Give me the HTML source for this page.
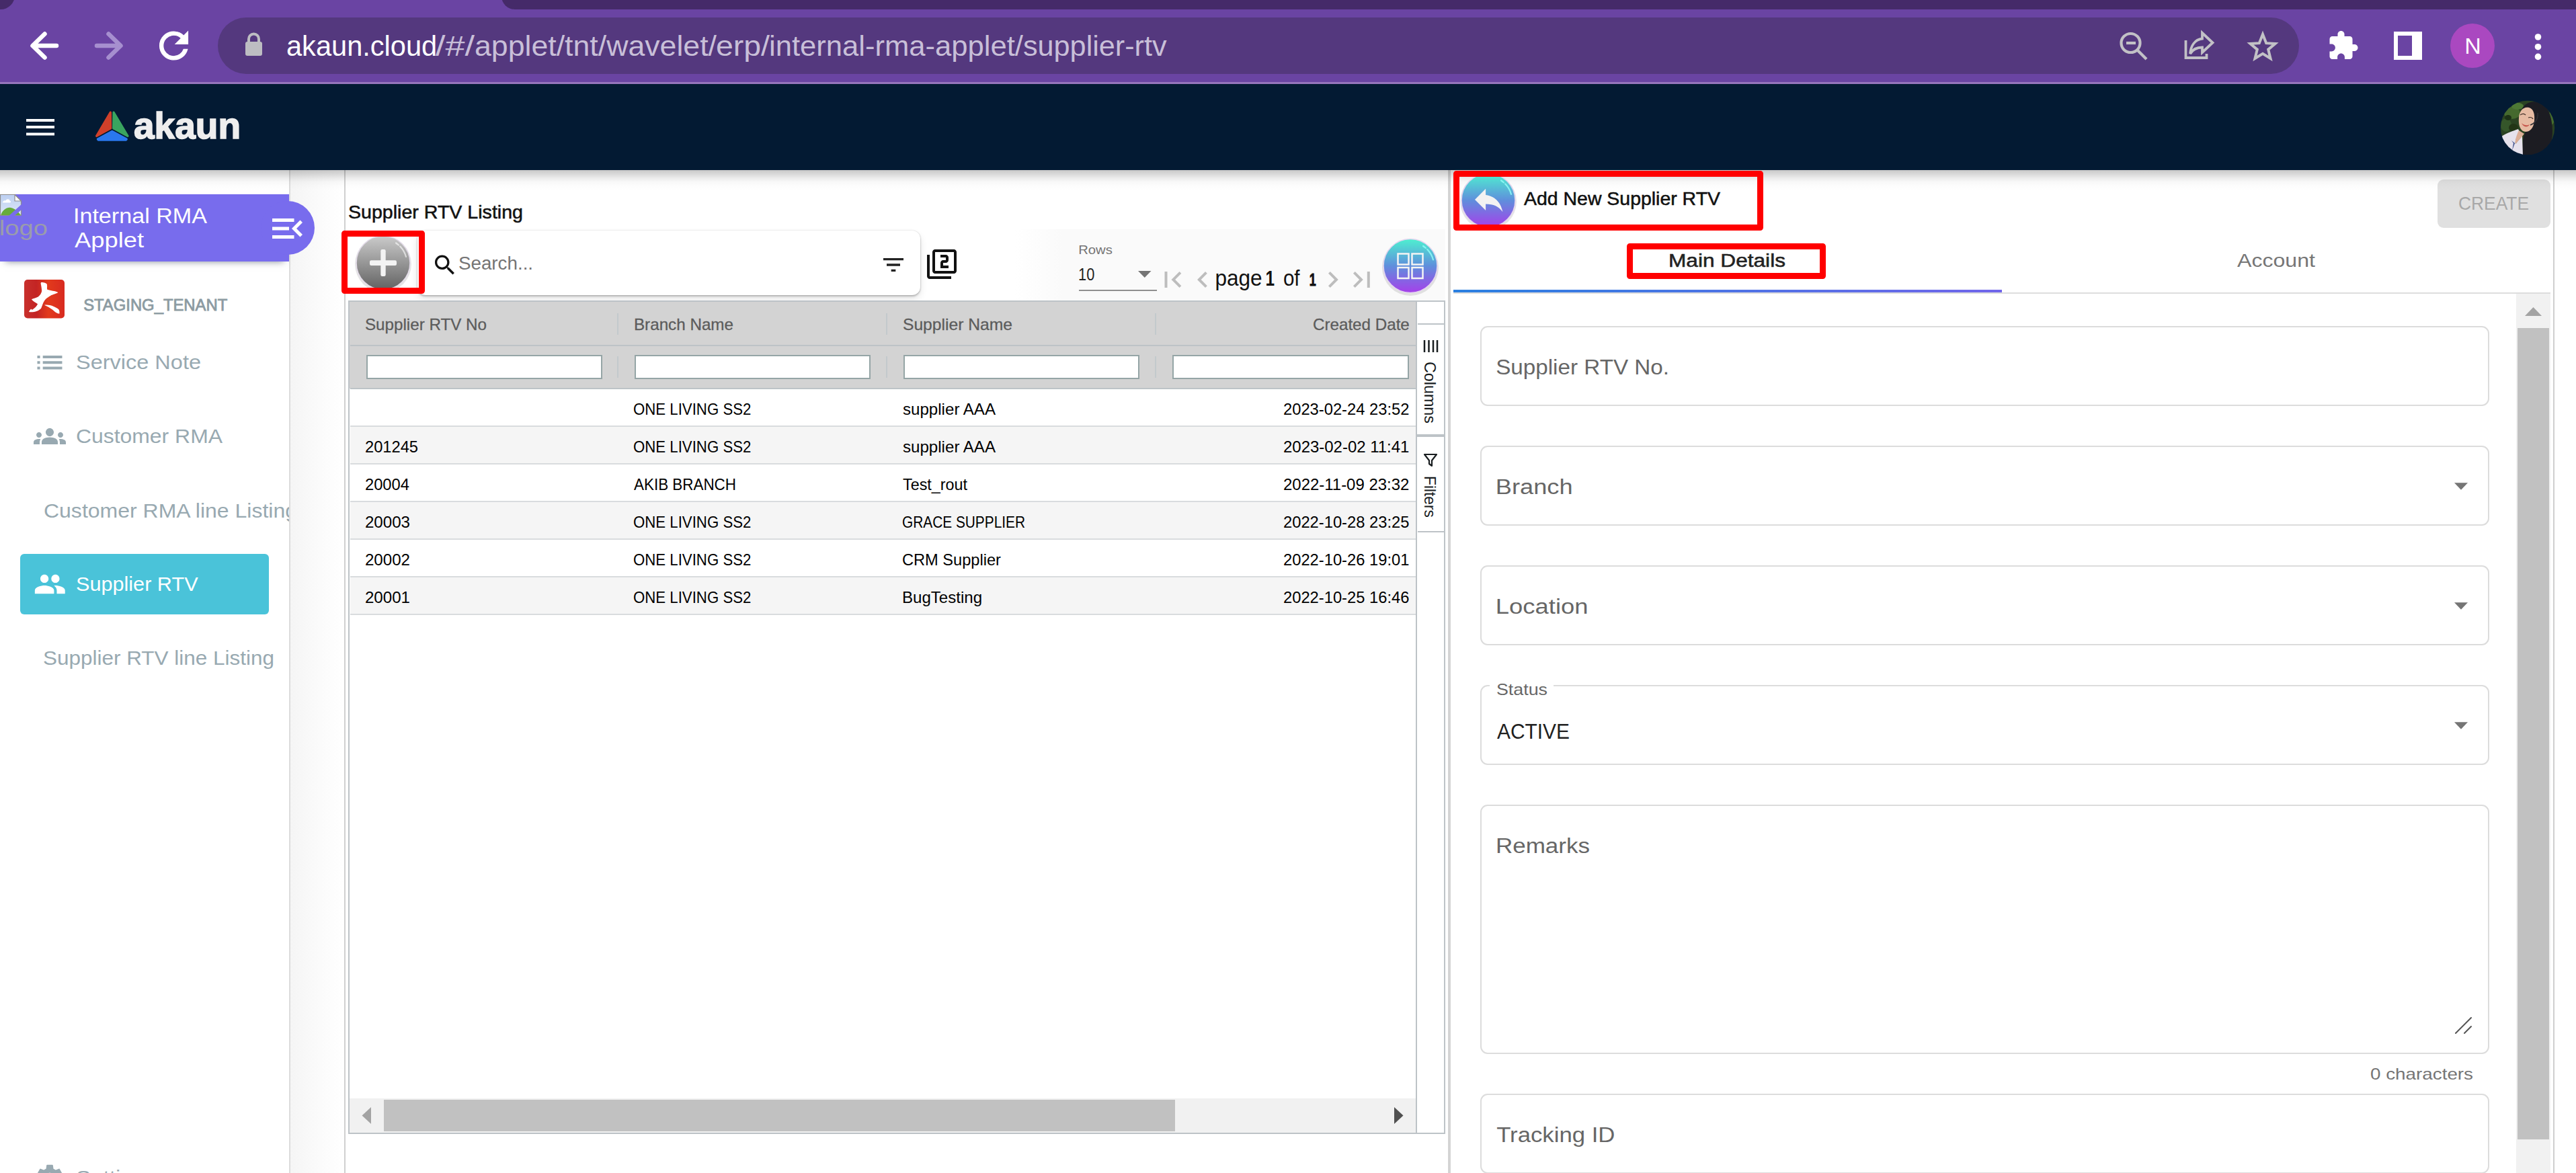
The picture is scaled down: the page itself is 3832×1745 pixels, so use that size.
<!DOCTYPE html>
<html lang="en"><head><meta charset="utf-8"><title>Supplier RTV</title>
<style>
html,body{margin:0;padding:0;background:#fff;}
body{width:3832px;height:1745px;overflow:hidden;position:relative;font-family:"Liberation Sans", Arial, sans-serif;}
#bg div{position:absolute;box-sizing:border-box;}
#bg{position:absolute;left:0;top:0;width:3832px;height:1745px;overflow:hidden;}
svg#ov{position:absolute;left:0;top:0;font-family:"Liberation Sans", Arial, sans-serif;}
</style></head><body>
<div id="bg">
<div style="left:0px;top:0px;width:3832px;height:122px;background:#6a44a3;"></div>
<div style="left:0px;top:122px;width:3832px;height:3px;background:#9675bd;"></div>
<div style="left:746px;top:-6px;width:3086px;height:19.7px;background:#452a69;border-bottom-left-radius:21px;"></div>
<div style="left:-20px;top:-7px;width:42px;height:20.7px;background:#452a69;border-bottom-right-radius:21px;"></div>
<div style="left:324px;top:26px;width:3096px;height:84px;background:#54387e;border-radius:42px;"></div>
<div style="left:0px;top:253px;width:430px;height:1500px;background:#fff;"></div>
<div style="left:430px;top:253px;width:2px;height:1500px;background:#dcdcdc;"></div>
<div style="left:432px;top:253px;width:80px;height:1500px;background:linear-gradient(90deg,#f5f5f5,#fbfbfb 55%,#fff);"></div>
<div style="left:512px;top:253px;width:2px;height:1500px;background:#d0d0d0;"></div>
<div style="left:0px;top:289px;width:430px;height:100px;background:#786ced;box-shadow:0 8px 10px -8px rgba(50,60,80,.6);"></div>
<div style="left:388px;top:299px;width:80px;height:80px;background:#786ced;border-radius:40px;"></div>
<div style="left:30px;top:824px;width:370px;height:90px;background:#4ac3d9;border-radius:6px;"></div>
<div style="left:1380px;top:341px;width:770px;height:107px;background:linear-gradient(90deg,#fff 0,#fff 130px,#fafafa 200px,#fafafa);"></div>
<div style="left:621px;top:343px;width:748px;height:96px;background:#fff;border-radius:12px;box-shadow:0 2px 3px rgba(0,0,0,.22),0 6px 12px rgba(0,0,0,.10),0 0 2px rgba(0,0,0,.18);"></div>
<div style="left:1605px;top:431px;width:116px;height:2px;background:#8f8f8f;"></div>
<div style="left:518px;top:447px;width:1632px;height:1240px;background:#fff;border:2px solid #bdc3c7;"></div>
<div style="left:520px;top:449px;width:1588px;height:129px;background:#d3d3d3;"></div>
<div style="left:521px;top:513px;width:1587px;height:2px;background:#bdc3c7;"></div>
<div style="left:521px;top:577px;width:1587px;height:2px;background:#bdc3c7;"></div>
<div style="left:918px;top:466px;width:2px;height:32px;background:#c3c9cc;"></div>
<div style="left:918px;top:530px;width:2px;height:32px;background:#c3c9cc;"></div>
<div style="left:1318px;top:466px;width:2px;height:32px;background:#c3c9cc;"></div>
<div style="left:1318px;top:530px;width:2px;height:32px;background:#c3c9cc;"></div>
<div style="left:1718px;top:466px;width:2px;height:32px;background:#c3c9cc;"></div>
<div style="left:1718px;top:530px;width:2px;height:32px;background:#c3c9cc;"></div>
<div style="left:545px;top:528px;width:351px;height:36px;background:#fff;border:2px solid #95a5a6;"></div>
<div style="left:944px;top:528px;width:351px;height:36px;background:#fff;border:2px solid #95a5a6;"></div>
<div style="left:1344px;top:528px;width:351px;height:36px;background:#fff;border:2px solid #95a5a6;"></div>
<div style="left:1744px;top:528px;width:352px;height:36px;background:#fff;border:2px solid #95a5a6;"></div>
<div style="left:521px;top:633px;width:1587px;height:2px;background:#d9dcde;"></div>
<div style="left:521px;top:635px;width:1587px;height:54px;background:#f5f5f5;"></div>
<div style="left:521px;top:689px;width:1587px;height:2px;background:#d9dcde;"></div>
<div style="left:521px;top:745px;width:1587px;height:2px;background:#d9dcde;"></div>
<div style="left:521px;top:747px;width:1587px;height:54px;background:#f5f5f5;"></div>
<div style="left:521px;top:801px;width:1587px;height:2px;background:#d9dcde;"></div>
<div style="left:521px;top:857px;width:1587px;height:2px;background:#d9dcde;"></div>
<div style="left:521px;top:859px;width:1587px;height:54px;background:#f5f5f5;"></div>
<div style="left:521px;top:913px;width:1587px;height:2px;background:#d9dcde;"></div>
<div style="left:520px;top:1634px;width:1588px;height:51px;background:#f1f1f1;"></div>
<div style="left:571px;top:1636px;width:1177px;height:47px;background:#c1c1c1;"></div>
<div style="left:2106px;top:449px;width:2px;height:1236px;background:#bdc3c7;"></div>
<div style="left:2109px;top:481px;width:39px;height:2px;background:#bdc3c7;"></div>
<div style="left:2108px;top:646px;width:40px;height:4px;background:#bdc3c7;"></div>
<div style="left:2109px;top:790px;width:39px;height:2px;background:#bdc3c7;"></div>
<div style="left:2154px;top:253px;width:4px;height:1500px;background:#d4d4d4;"></div>
<div style="left:3798px;top:253px;width:2px;height:1500px;background:#cfcfcf;"></div>
<div style="left:3626px;top:267px;width:168px;height:72px;background:#e0e0e0;border-radius:9px;"></div>
<div style="left:2162px;top:435px;width:1632px;height:2px;background:#dddddd;"></div>
<div style="left:3743px;top:437px;width:51px;height:1320px;background:#f1f1f1;"></div>
<div style="left:3745px;top:488px;width:47px;height:1207px;background:#c1c1c1;"></div>
<div style="left:2202px;top:485px;width:1501px;height:119px;border:2px solid #dcdcdc;border-radius:11px;background:#fff;"></div>
<div style="left:2202px;top:663px;width:1501px;height:119px;border:2px solid #dcdcdc;border-radius:11px;background:#fff;"></div>
<div style="left:2202px;top:841px;width:1501px;height:119px;border:2px solid #dcdcdc;border-radius:11px;background:#fff;"></div>
<div style="left:2202px;top:1019px;width:1501px;height:119px;border:2px solid #dcdcdc;border-radius:11px;background:#fff;"></div>
<div style="left:2216px;top:1017px;width:95px;height:6px;background:#fff;"></div>
<div style="left:2202px;top:1197px;width:1501px;height:371px;border:2px solid #dcdcdc;border-radius:11px;background:#fff;"></div>
<div style="left:2202px;top:1627px;width:1501px;height:119px;border:2px solid #dcdcdc;border-radius:11px;background:#fff;"></div>
<div style="left:0px;top:253px;width:3832px;height:30px;background:linear-gradient(rgba(0,0,0,.215) 0,rgba(0,0,0,.13) 25%,rgba(0,0,0,.07) 42%,rgba(0,0,0,.027) 59%,rgba(0,0,0,.012) 76%,rgba(0,0,0,0) 100%);"></div>
<div style="left:0px;top:125px;width:3832px;height:128px;background:#031a33;"></div>
</div>
<svg id="ov" width="3832" height="1745" viewBox="0 0 3832 1745">
<defs>
<linearGradient id="gAqua" x1="0" y1="0" x2="0" y2="1"><stop offset="0" stop-color="#4ef0d0"/><stop offset="0.5" stop-color="#5f8fdc"/><stop offset="1" stop-color="#a63fea"/></linearGradient>
<linearGradient id="gGrey" x1="0" y1="0" x2="0" y2="1"><stop offset="0" stop-color="#cbcbcb"/><stop offset="1" stop-color="#626262"/></linearGradient>
<linearGradient id="gSky" x1="0" y1="0" x2="0" y2="1"><stop offset="0" stop-color="#bdd0f2"/><stop offset="1" stop-color="#dde7f8"/></linearGradient>
<linearGradient id="gTab" x1="0" y1="0" x2="1" y2="0"><stop offset="0" stop-color="#2b80e0"/><stop offset="1" stop-color="#7166ea"/></linearGradient>
<linearGradient id="gRed" x1="0" y1="0" x2="1" y2="0"><stop offset="0" stop-color="#c8302c"/><stop offset="0.3" stop-color="#c32424"/><stop offset="0.6" stop-color="#e23a1c"/><stop offset="1" stop-color="#d82a20"/></linearGradient>
<radialGradient id="gFace" cx="0.5" cy="0.4" r="0.5"><stop offset="0" stop-color="#c79a80"/><stop offset="1" stop-color="#8a5f4c"/></radialGradient>
<filter id="fBlur" x="-10%" y="-10%" width="120%" height="120%"><feGaussianBlur stdDeviation="0.700"/></filter>
<clipPath id="cAv"><circle cx="3760" cy="190" r="40.200"/></clipPath>
<clipPath id="cTrk"><rect x="2200" y="1640" width="400" height="66"/></clipPath>
<clipPath id="cSide"><rect x="0" y="253" width="430" height="1500"/></clipPath>
</defs>
<g fill="none" stroke-width="6.5" stroke-linecap="round" stroke-linejoin="round"><path stroke="#fff" d="M84 68 H49 M66.500 50.500 L48.500 68 L66.500 85.500"/><path stroke="#a68fcf" d="M144 68 H179 M161.500 50.500 L179.500 68 L161.500 85.500"/></g>
<path transform="translate(227 36.5) scale(2.625)" fill="#fff" d="M17.65 6.35C16.2 4.9 14.21 4 12 4c-4.42 0-7.99 3.58-7.99 8s3.57 8 7.99 8c3.73 0 6.84-2.55 7.73-6h-2.08c-.82 2.33-3.04 4-5.65 4-3.31 0-6-2.69-6-6s2.69-6 6-6c1.66 0 3.14.69 4.22 1.78L13 11h7V4l-2.35 2.35z" stroke="#fff" stroke-width=".45"/>
<rect x="365" y="62" width="25" height="21" rx="3" fill="#bdbdc2"/>
<path d="M370 64 V58 a7.5 7.5 0 0 1 15 0 V64" fill="none" stroke="#bdbdc2" stroke-width="4"/>
<text x="425.97" y="82.5" font-size="42" fill="#fff" textLength="224.28" lengthAdjust="spacingAndGlyphs">akaun.cloud</text>
<text x="648.0" y="82.5" font-size="42" fill="#c8bfd8" textLength="58.01" lengthAdjust="spacingAndGlyphs">/#/</text>
<text x="705.99" y="82.5" font-size="42" fill="#c8bfd8" textLength="360.01" lengthAdjust="spacingAndGlyphs">applet/tnt/wavelet/</text>
<text x="1064.98" y="82.5" font-size="42" fill="#c8bfd8" textLength="80.04" lengthAdjust="spacingAndGlyphs">erp/</text>
<text x="1143.98" y="82.5" font-size="42" fill="#c8bfd8" textLength="378.02" lengthAdjust="spacingAndGlyphs">internal-rma-applet/</text>
<text x="1521.99" y="82.5" font-size="42" fill="#c8bfd8" textLength="213.61" lengthAdjust="spacingAndGlyphs">supplier-rtv</text>
<g fill="none" stroke="#c2c1c6" stroke-width="4.200" stroke-linecap="butt"><circle cx="3169.500" cy="64" r="14"/><path d="M3180 75 L3193 88"/><path d="M3163 64 H3177"/></g>
<g fill="none" stroke="#c2c1c6" stroke-width="3.800" stroke-linejoin="miter"><path d="M3251.500 60 V86 H3282.500 V80"/><path d="M3276 49 L3291.500 63.500 L3276 78 V70.500 C3268 70.500 3262 73 3258 80 C3259 68 3265 59 3276 57.500 Z"/></g>
<path d="M3366 51 L3371.200 64.200 L3384.500 65 L3374.200 73.600 L3377.500 87 L3366 79.800 L3354.500 87 L3357.800 73.600 L3347.500 65 L3360.800 64.200 Z" fill="none" stroke="#c2c1c6" stroke-width="4" stroke-linejoin="miter"/>
<path transform="translate(3461.5 44) scale(2.0)" fill="#fff" d="M20.500 11H19V7c0-1.100-.900-2-2-2h-4V3.500C13 2.120 11.880 1 10.500 1S8 2.120 8 3.500V5H4c-1.100 0-1.990.900-1.990 2v3.800H3.500c1.490 0 2.700 1.210 2.700 2.700s-1.210 2.700-2.700 2.700H2V20c0 1.100.900 2 2 2h3.800v-1.500c0-1.490 1.210-2.700 2.700-2.700 1.490 0 2.700 1.210 2.700 2.700V22H17c1.100 0 2-.900 2-2v-4h1.500c1.380 0 2.500-1.120 2.500-2.500S21.880 11 20.500 11z" />
<path fill-rule="evenodd" fill="#fff" d="M3561 47 H3603 V89 H3561 Z M3567 53 V83 H3588 V53 Z"/>
<circle cx="3678" cy="68" r="33" fill="#aa48c0"/>
<text x="3678.5" y="80" font-size="34" fill="#fff" text-anchor="middle">N</text>
<circle cx="3775.500" cy="55" r="4.800" fill="#fff"/><circle cx="3775.500" cy="69.700" r="4.800" fill="#fff"/><circle cx="3775.500" cy="84.400" r="4.800" fill="#fff"/>
<rect x="39" y="177" width="42" height="4" fill="#fff"/><rect x="39" y="187" width="42" height="4" fill="#fff"/><rect x="39" y="197.500" width="42" height="4" fill="#fff"/>
<g stroke-linejoin="round" stroke-width="3.400"><path d="M164.300 167.300 L143.700 202.300 L164.600 190.700 Z" fill="#d0402a" stroke="#d0402a"/><path d="M169.100 167.300 L189.900 202.300 L168.800 190.700 Z" fill="#3aa55f" stroke="#3aa55f"/><path d="M166.800 195.600 L145.500 207 L146.500 208.100 L187.200 208.100 L188.200 207 Z" fill="#2a78ee" stroke="#2a78ee"/></g>
<text x="198.98" y="206" font-size="55" fill="#eeeeee" font-weight="bold" textLength="159.08" lengthAdjust="spacingAndGlyphs" stroke="#eeeeee" stroke-width="1.6">akaun</text>
<g clip-path="url(#cAv)"><g filter="url(#fBlur)"><rect x="3719" y="149" width="82" height="82" fill="#2c4322"/><ellipse cx="3737" cy="168" rx="12" ry="9" fill="#44692e"/><ellipse cx="3728" cy="186" rx="8" ry="10" fill="#35562a"/><ellipse cx="3745" cy="158" rx="9" ry="5" fill="#4e7835"/><ellipse cx="3739" cy="190" rx="7" ry="6" fill="#223519"/><ellipse cx="3795" cy="176" rx="5" ry="10" fill="#456c2f"/><ellipse cx="3731" cy="175" rx="5" ry="4" fill="#1f3117"/><path d="M3750 168 C3752 152 3770 148 3782 154 C3792 160 3797 178 3797 196 C3797 214 3790 226 3778 232 L3752 232 C3752 222 3752 210 3755 200 C3758 192 3768 186 3769 176 C3769 166 3760 160 3750 168 Z" fill="#1d1d22"/><path d="M3747 176 C3747 165 3754 158 3762 160 C3769 162 3771 170 3770 180 C3769 190 3764 196 3757 196 C3750 196 3746 187 3747 176 Z" fill="#e6bba3"/><path d="M3751 183 C3755 187 3760 187 3763 185 C3761 190 3754 190 3751 183 Z" fill="#c8584e"/><path d="M3749 171 C3752 169 3755 169 3757 171 M3761 175 C3764 174 3767 175 3768 177" stroke="#3a2a24" stroke-width="1.300" fill="none"/><path d="M3721 203 C3730 197 3738 195 3746 192 L3748 196 C3744 203 3741 209 3742 214 L3752 202 L3753 232 L3738 232 C3730 224 3724 214 3721 203 Z" fill="#e6e2ec"/><path d="M3747 194 L3755 199 L3751 204 L3742 214 C3741 208 3744 200 3747 194 Z" fill="#dcae96"/><path d="M3736 209 L3741 213 L3737 224 L3739 213 Z" fill="#3d4f8a"/><path d="M3764 186 C3770 184 3776 178 3775 168" stroke="#2e2e34" stroke-width="1.500" fill="none"/></g></g>
<g><path d="M0.500 289.500 H22 L31.500 299 V320.500 H0.500 Z" fill="url(#gSky)" stroke="#8e8e8e" stroke-width="1.200"/><path d="M22 289.500 V299 H31.500 Z" fill="#fdfdfd" stroke="#8e8e8e" stroke-width="1.200" stroke-linejoin="round"/><path d="M1.200 320 C4 312 10 308 16 309 C22 310 27 315 31 320 Z" fill="#67ab3c"/><path d="M4 301.500 C4 298.500 7 297.500 8.500 298.500 C9.500 295.500 14 295.500 14.500 298.500 C16.500 298.500 16.500 301.500 15 301.500 Z" fill="#fff"/><path d="M32.500 303.500 V311.500 L21 321.500 H12.500 Z" fill="#786ced"/></g>
<text x="-1.16" y="350" font-size="32" fill="#9a9cab" textLength="72.26" lengthAdjust="spacingAndGlyphs">logo</text>
<text x="108.95" y="332" font-size="31" fill="#fff" textLength="199.07" lengthAdjust="spacingAndGlyphs">Internal RMA</text>
<text x="111.0" y="368" font-size="31" fill="#fff" textLength="103.0" lengthAdjust="spacingAndGlyphs">Applet</text>
<path transform="translate(397.5 310) scale(2.5)" fill="#fff" d="M3 18h13v-2H3v2zm0-5h10v-2H3v2zm0-7v2h13V6H3zm18 9.590L17.420 12 21 8.410 19.590 7l-5 5 5 5L21 15.590z" />
<rect x="36" y="416" width="60" height="57.500" rx="5" fill="url(#gRed)"/>
<path fill="#fff" d="M61.400 420.100 C65 420 69 421 69.900 423 C70.500 426 69.500 428.500 70.300 430.700 C75 432.500 82 432.500 86.400 434.900 C83 437.500 77 438 73.700 440.700 C70 443 67.500 445 66 447.600 C63.500 451 63 455 61.400 458.300 C58 463 50 465 43 464.100 C43.500 462.500 44.500 461 46.100 459.500 C47 460.500 47.500 461 48.500 460.500 C51.500 458.500 54.500 455.500 56.100 452.200 C52.500 450 49 448 46.900 445.300 C50 443.500 54 443 56.800 441.400 C60 439 61.500 436 62.200 433 C62 429 61.500 426 60.700 422.300 C60.500 421 61 420.300 61.400 420.100 Z M66 453.700 C70 453 75 453.800 78.300 455.300 C82 457 85.500 458.500 87.500 460.600 C88.500 462.500 88.800 465 88.300 466.800 C85 466.500 82.500 464.500 79.900 462.200 C77 460 74.500 458.300 72.200 456.800 C70 455.500 68 454.800 66 453.700 Z"/>
<text x="124.19" y="462" font-size="23" fill="#8c9ba2" textLength="214.01" lengthAdjust="spacingAndGlyphs" stroke="#8c9ba2" stroke-width=".8">STAGING_TENANT</text>
<path transform="translate(49.3 514.6) scale(2.055)" fill="#98a9b1" d="M3 13h2v-2H3v2zm0 4h2v-2H3v2zm0-8h2V7H3v2zm4 4h14v-2H7v2zm0 4h14v-2H7v2zM7 7v2h14V7H7z" />
<text x="112.96" y="549" font-size="30" fill="#98a9b1" textLength="186.07" lengthAdjust="spacingAndGlyphs">Service Note</text>
<path transform="translate(50 625) scale(2)" fill="#98a9b1" d="M12 12.750c1.630 0 3.070.390 4.240.900 1.080.480 1.760 1.560 1.760 2.730V18H6v-1.610c0-1.180.680-2.260 1.760-2.730 1.170-.520 2.610-.910 4.240-.910zM4 13c1.100 0 2-.900 2-2s-.900-2-2-2-2 .900-2 2 .900 2 2 2zm1.130 1.100c-.370-.060-.740-.100-1.130-.100-.990 0-1.930.210-2.780.580C.480 14.900 0 15.620 0 16.430V18h4.500v-1.610c0-.830.230-1.610.630-2.290zM20 13c1.100 0 2-.900 2-2s-.900-2-2-2-2 .900-2 2 .900 2 2 2zm4 3.430c0-.810-.480-1.530-1.220-1.850-.850-.370-1.790-.580-2.780-.580-.390 0-.760.040-1.130.100.400.680.630 1.460.630 2.290V18H24v-1.570zM12 6c1.660 0 3 1.340 3 3s-1.340 3-3 3-3-1.340-3-3 1.340-3 3-3z" />
<text x="112.98" y="659" font-size="30" fill="#98a9b1" textLength="218.02" lengthAdjust="spacingAndGlyphs">Customer RMA</text>
<g clip-path="url(#cSide)">
<text x="64.98" y="770" font-size="30" fill="#98a9b1" textLength="377.04" lengthAdjust="spacingAndGlyphs">Customer RMA line Listing</text>
</g>
<path transform="translate(49.8 844.6) scale(2.04)" fill="#fff" d="M16 11c1.660 0 2.990-1.340 2.990-3S17.660 5 16 5c-1.660 0-3 1.340-3 3s1.340 3 3 3zm-8 0c1.660 0 2.990-1.340 2.990-3S9.660 5 8 5C6.340 5 5 6.340 5 8s1.340 3 3 3zm0 2c-2.330 0-7 1.170-7 3.500V19h14v-2.500c0-2.330-4.670-3.500-7-3.500zm8 0c-.290 0-.620.020-.970.050 1.160.840 1.970 1.970 1.970 3.450V19h6v-2.500c0-2.330-4.670-3.500-7-3.500z" />
<text x="112.97" y="879" font-size="29.5" fill="#fff" textLength="181.63" lengthAdjust="spacingAndGlyphs">Supplier RTV</text>
<text x="63.98" y="989" font-size="30" fill="#98a9b1" textLength="344.05" lengthAdjust="spacingAndGlyphs">Supplier RTV line Listing</text>
<path transform="translate(50 1728) scale(2)" fill="#98a9b1" d="M19.140 12.940c.040-.300.060-.610.060-.940 0-.320-.020-.640-.070-.940l2.030-1.580c.180-.140.230-.410.120-.610l-1.920-3.320c-.120-.220-.370-.290-.590-.220l-2.390.960c-.500-.380-1.030-.700-1.620-.940l-.360-2.540c-.040-.240-.240-.410-.480-.410h-3.840c-.240 0-.430.170-.470.410l-.360 2.540c-.590.240-1.130.570-1.620.940l-2.390-.960c-.220-.080-.470 0-.590.220L2.740 8.870c-.120.210-.080.470.120.610l2.030 1.580c-.050.300-.090.630-.090.940s.020.640.070.940l-2.030 1.580c-.180.140-.230.410-.120.610l1.920 3.320c.120.220.370.290.590.220l2.390-.960c.500.380 1.030.700 1.620.940l.360 2.540c.050.240.240.410.480.410h3.840c.240 0 .440-.170.470-.410l.360-2.540c.590-.240 1.130-.560 1.620-.940l2.390.960c.220.080.470 0 .590-.220l1.920-3.320c.120-.220.070-.470-.120-.610l-2.010-1.580zM12 15.600c-1.980 0-3.600-1.620-3.600-3.600s1.620-3.600 3.600-3.600 3.600 1.620 3.600 3.600-1.620 3.600-3.600 3.600z" />
<text x="112.95" y="1762" font-size="30" fill="#98a9b1" textLength="120.08" lengthAdjust="spacingAndGlyphs">Settings</text>
<text x="517.99" y="324.5" font-size="28" fill="#111" textLength="260.02" lengthAdjust="spacingAndGlyphs" stroke="#111" stroke-width=".55">Supplier RTV Listing</text>
<path transform="translate(642 374.5) scale(1.657)" fill="#111" d="M15.500 14h-.790l-.280-.270C15.410 12.590 16 11.110 16 9.500 16 5.910 13.090 3 9.500 3S3 5.910 3 9.500 5.910 16 9.500 16c1.610 0 3.090-.590 4.230-1.570l.270.280v.790l5 4.990L20.490 19l-4.990-5zm-6 0C7.010 14 5 11.990 5 9.500S7.010 5 9.500 5 14 7.010 14 9.500 11.990 14 9.500 14z" />
<text x="681.97" y="401" font-size="27" fill="#757575" textLength="111.09" lengthAdjust="spacingAndGlyphs">Search...</text>
<path transform="translate(1309 374) scale(1.667)" fill="#222" d="M10 18h4v-2h-4v2zM3 6v2h18V6H3zm3 7h12v-2H6v2z" />
<path transform="translate(1377 369) scale(2)" fill="#111" d="M3 5H1v16c0 1.100.900 2 2 2h16v-2H3V5zm18-4H7c-1.100 0-2 .900-2 2v14c0 1.100.900 2 2 2h14c1.100 0 2-.900 2-2V3c0-1.100-.900-2-2-2zm0 16H7V3h14v14zm-4-4h-4v-2h2c1.100 0 2-.890 2-2V7c0-1.110-.900-2-2-2h-4v2h4v2h-2c-1.100 0-2 .890-2 2v4h6v-2z" />
<circle cx="570" cy="393" r="42" fill="#000" opacity=".10"/>
<circle cx="570" cy="391" r="40" fill="url(#gGrey)" stroke="#e4dcea" stroke-width="1.500"/>
<path d="M589 361.500 A36 36 0 0 1 604 382" fill="none" stroke="#ffffff" stroke-opacity=".6" stroke-width="2.200" stroke-linecap="round" stroke-dasharray="5 3 30"/>
<rect x="550" y="387.300" width="40" height="7.600" rx="2.200" fill="#f3f3f3"/><rect x="566.300" y="371" width="7.400" height="40" rx="2.200" fill="#f3f3f3"/>
<text x="1604.16" y="378" font-size="18.5" fill="#757575" textLength="50.67" lengthAdjust="spacingAndGlyphs">Rows</text>
<text x="1604.08" y="416.5" font-size="25.5" fill="#222" textLength="24.2" lengthAdjust="spacingAndGlyphs">10</text>
<path d="M1693 403 H1712.500 L1702.750 413 Z" fill="#757575"/>
<path transform="translate(1720.5 392) scale(2)" fill="#bdbdbd" d="M18.410 16.590L13.820 12l4.590-4.590L17 6l-6 6 6 6zM6 6h2v12H6z" />
<path transform="translate(1765 392) scale(2)" fill="#bdbdbd" d="M15.410 7.410L14 6l-6 6 6 6 1.410-1.410L10.830 12z" />
<text x="1807.48" y="424.5" font-size="33" fill="#111" textLength="70.2" lengthAdjust="spacingAndGlyphs">page</text>
<text x="1882.61" y="424.5" font-size="31" fill="#111" font-weight="bold" textLength="13.56" lengthAdjust="spacingAndGlyphs">1</text>
<text x="1908.88" y="424.5" font-size="33" fill="#111" textLength="24.7" lengthAdjust="spacingAndGlyphs">of</text>
<text x="1947.72" y="424.5" font-size="25" fill="#111" font-weight="bold" textLength="9.95" lengthAdjust="spacingAndGlyphs" stroke="#111" stroke-width=".9">1</text>
<path transform="translate(1958.8 392) scale(2)" fill="#bdbdbd" d="M10 6L8.590 7.410 13.170 12l-4.580 4.590L10 18l6-6z" />
<path transform="translate(2001.8 392) scale(2)" fill="#bdbdbd" d="M5.590 7.410L10.180 12l-4.590 4.590L7 18l6-6-6-6zM16 6h2v12h-2z" />
<circle cx="2098" cy="398" r="42" fill="#000" opacity=".10"/>
<circle cx="2098" cy="395.500" r="40" fill="url(#gAqua)" stroke="#e4d4f0" stroke-width="1.500"/>
<path d="M2117 366 A36 36 0 0 1 2132 386.500" fill="none" stroke="#8ffcf6" stroke-opacity=".85" stroke-width="2.200" stroke-linecap="round" stroke-dasharray="5 3 30"/>
<g fill="none" stroke="#f4f4f4" stroke-width="2.500"><rect x="2079.500" y="377.500" width="16" height="16"/><rect x="2100.500" y="377.500" width="16" height="16"/><rect x="2079.500" y="398" width="16" height="16"/><rect x="2100.500" y="398" width="16" height="16"/></g>
<text x="542.98" y="491" font-size="24" fill="#5c5c5c" textLength="181.04" lengthAdjust="spacingAndGlyphs" stroke="#5c5c5c" stroke-width=".3">Supplier RTV No</text>
<text x="942.98" y="491" font-size="24" fill="#5c5c5c" textLength="148.03" lengthAdjust="spacingAndGlyphs" stroke="#5c5c5c" stroke-width=".3">Branch Name</text>
<text x="1342.98" y="491" font-size="24" fill="#5c5c5c" textLength="163.03" lengthAdjust="spacingAndGlyphs" stroke="#5c5c5c" stroke-width=".3">Supplier Name</text>
<text x="1952.97" y="491" font-size="24" fill="#5c5c5c" textLength="143.85" lengthAdjust="spacingAndGlyphs" stroke="#5c5c5c" stroke-width=".3">Created Date</text>
<text x="941.97" y="616.5" font-size="24" fill="#000" textLength="175.44" lengthAdjust="spacingAndGlyphs">ONE LIVING SS2</text>
<text x="1343.0" y="616.5" font-size="24" fill="#000" textLength="138.01" lengthAdjust="spacingAndGlyphs">supplier AAA</text>
<text x="1908.99" y="616.5" font-size="24" fill="#000" textLength="187.42" lengthAdjust="spacingAndGlyphs">2023-02-24 23:52</text>
<text x="542.96" y="672.5" font-size="24" fill="#000" textLength="79.05" lengthAdjust="spacingAndGlyphs">201245</text>
<text x="941.97" y="672.5" font-size="24" fill="#000" textLength="175.44" lengthAdjust="spacingAndGlyphs">ONE LIVING SS2</text>
<text x="1343.0" y="672.5" font-size="24" fill="#000" textLength="138.01" lengthAdjust="spacingAndGlyphs">supplier AAA</text>
<text x="1908.99" y="672.5" font-size="24" fill="#000" textLength="187.42" lengthAdjust="spacingAndGlyphs">2023-02-02 11:41</text>
<text x="542.95" y="728.5" font-size="24" fill="#000" textLength="66.06" lengthAdjust="spacingAndGlyphs">20004</text>
<text x="942.99" y="728.5" font-size="24" fill="#000" textLength="152.03" lengthAdjust="spacingAndGlyphs">AKIB BRANCH</text>
<text x="1342.99" y="728.5" font-size="24" fill="#000" textLength="96.01" lengthAdjust="spacingAndGlyphs">Test_rout</text>
<text x="1908.99" y="728.5" font-size="24" fill="#000" textLength="187.42" lengthAdjust="spacingAndGlyphs">2022-11-09 23:32</text>
<text x="542.93" y="784.5" font-size="24" fill="#000" textLength="67.11" lengthAdjust="spacingAndGlyphs">20003</text>
<text x="941.97" y="784.5" font-size="24" fill="#000" textLength="175.44" lengthAdjust="spacingAndGlyphs">ONE LIVING SS2</text>
<text x="1341.97" y="784.5" font-size="24" fill="#000" textLength="183.06" lengthAdjust="spacingAndGlyphs">GRACE SUPPLIER</text>
<text x="1908.99" y="784.5" font-size="24" fill="#000" textLength="187.42" lengthAdjust="spacingAndGlyphs">2022-10-28 23:25</text>
<text x="542.93" y="840.5" font-size="24" fill="#000" textLength="67.11" lengthAdjust="spacingAndGlyphs">20002</text>
<text x="941.97" y="840.5" font-size="24" fill="#000" textLength="175.44" lengthAdjust="spacingAndGlyphs">ONE LIVING SS2</text>
<text x="1341.98" y="840.5" font-size="24" fill="#000" textLength="147.03" lengthAdjust="spacingAndGlyphs">CRM Supplier</text>
<text x="1908.99" y="840.5" font-size="24" fill="#000" textLength="187.42" lengthAdjust="spacingAndGlyphs">2022-10-26 19:01</text>
<text x="542.93" y="896.5" font-size="24" fill="#000" textLength="67.11" lengthAdjust="spacingAndGlyphs">20001</text>
<text x="941.97" y="896.5" font-size="24" fill="#000" textLength="175.44" lengthAdjust="spacingAndGlyphs">ONE LIVING SS2</text>
<text x="1341.96" y="896.5" font-size="24" fill="#000" textLength="119.08" lengthAdjust="spacingAndGlyphs">BugTesting</text>
<text x="1908.99" y="896.5" font-size="24" fill="#000" textLength="187.42" lengthAdjust="spacingAndGlyphs">2022-10-25 16:46</text>
<path d="M552 1647 V1672 L538.500 1659.500 Z" fill="#a3a3a3"/>
<path d="M2074 1647 V1672 L2087.500 1659.500 Z" fill="#505050"/>
<g stroke="#181d1f" stroke-width="2.500"><path d="M2119 506 V524 M2125.500 506 V524 M2132 506 V524 M2138 506 V524"/></g>
<text transform="translate(2119 538) rotate(90)" font-size="24" fill="#181d1f" textLength="92" lengthAdjust="spacingAndGlyphs">Columns</text>
<path d="M2119 676 H2137 L2130 685 V693 L2126 690 V685 Z" fill="none" stroke="#181d1f" stroke-width="2.200" stroke-linejoin="round"/>
<text transform="translate(2119 708) rotate(90)" font-size="24" fill="#181d1f" textLength="62" lengthAdjust="spacingAndGlyphs">Filters</text>
<circle cx="2214" cy="300" r="42" fill="#000" opacity=".10"/>
<circle cx="2214" cy="298" r="40" fill="url(#gAqua)" stroke="#e4d4f0" stroke-width="1.500"/>
<path d="M2233 268.500 A36 36 0 0 1 2248 289" fill="none" stroke="#8ffcf6" stroke-opacity=".85" stroke-width="2.200" stroke-linecap="round" stroke-dasharray="5 3 30"/>
<path transform="translate(2187.1 269.3) scale(2.3)" fill="#f2f2f2" d="M10 9V5l-7 7 7 7v-4.100c5 0 8.500 1.600 11 5.100-1-5-4-10-11-11z" />
<text x="2267.0" y="305" font-size="28" fill="#111" textLength="292.0" lengthAdjust="spacingAndGlyphs" stroke="#111" stroke-width=".55">Add New Supplier RTV</text>
<text x="3656.96" y="312" font-size="28" fill="#a8a8a8" textLength="105.07" lengthAdjust="spacingAndGlyphs">CREATE</text>
<text x="2481.96" y="396.5" font-size="28" fill="#222" textLength="174.05" lengthAdjust="spacingAndGlyphs" stroke="#222" stroke-width=".55">Main Details</text>
<text x="3328.0" y="396.5" font-size="28" fill="#767676" textLength="116.0" lengthAdjust="spacingAndGlyphs">Account</text>
<rect x="2162" y="431" width="816" height="4" fill="url(#gTab)"/>
<path d="M3756 470 H3781 L3768.500 457 Z" fill="#a3a3a3"/>
<text x="2225.17" y="557" font-size="31" fill="#666666" textLength="257.88" lengthAdjust="spacingAndGlyphs">Supplier RTV No.</text>
<text x="2224.86" y="735" font-size="31" fill="#666666" textLength="114.66" lengthAdjust="spacingAndGlyphs">Branch</text>
<text x="2224.89" y="913" font-size="31" fill="#666666" textLength="137.62" lengthAdjust="spacingAndGlyphs">Location</text>
<text x="2225.97" y="1034" font-size="24" fill="#666666" textLength="76.06" lengthAdjust="spacingAndGlyphs">Status</text>
<text x="2226.99" y="1099" font-size="31" fill="#212121" textLength="108.02" lengthAdjust="spacingAndGlyphs">ACTIVE</text>
<path d="M3651 718.3 H3671 L3661 728.8 Z" fill="#757575"/>
<path d="M3651 896.3 H3671 L3661 906.8 Z" fill="#757575"/>
<path d="M3651 1074.3 H3671 L3661 1084.8 Z" fill="#757575"/>
<text x="2224.91" y="1269" font-size="31" fill="#666666" textLength="140.12" lengthAdjust="spacingAndGlyphs">Remarks</text>
<g stroke="#555" stroke-width="2" stroke-linecap="round"><path d="M3653 1537 L3676 1514"/><path d="M3666 1537 L3676 1527"/></g>
<text x="3525.99" y="1606" font-size="24" fill="#757575" textLength="153.03" lengthAdjust="spacingAndGlyphs">0 characters</text>
<text x="2226.18" y="1699" font-size="31" fill="#666666" textLength="176.25" lengthAdjust="spacingAndGlyphs" clip-path="url(#cTrk)">Tracking ID</text>
<g fill="none" stroke="#ff0000" stroke-width="9" stroke-linejoin="round"><rect x="512.500" y="347.500" width="115" height="85"/><rect x="2166.500" y="258.500" width="452" height="80"/><rect x="2424.500" y="366.500" width="287" height="44"/></g>
</svg>
</body></html>
